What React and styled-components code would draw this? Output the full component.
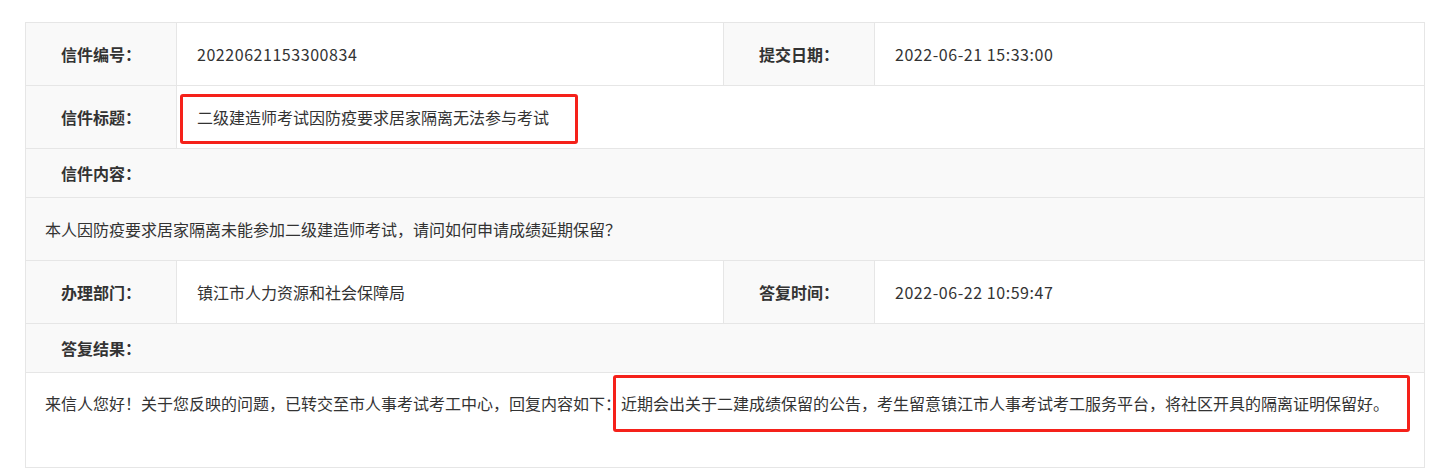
import styled, { createGlobalStyle } from "styled-components";

/* 전역 Style */
const GlobalStyle = createGlobalStyle`
  body {
    margin: 0;
    background: #fff;
    font-family: "Noto Sans CJK SC", "Noto Sans", sans-serif;
    color: #333;
  }
`;

/* 信件详情 */
const App = () => {
  return (
    <>
      <GlobalStyle />
      <Page>
        <Table>
          <Row>
            <Label>信件编号：</Label>
            <Value $w="547px" $num>20220621153300834</Value>
            <Label>提交日期：</Label>
            <Value $last $num>2022-06-21 15:33:00</Value>
          </Row>
          <Row>
            <Label>信件标题：</Label>
            <Value $last>
              <Mark $t="-11px" $r="-29px" $b="-15px" $l="-17px">
                二级建造师考试因防疫要求居家隔离无法参与考试
              </Mark>
            </Value>
          </Row>
          <HeadRow>
            <Label $plain>信件内容：</Label>
          </HeadRow>
          <TextRow $gray>
            本人因防疫要求居家隔离未能参加二级建造师考试，请问如何申请成绩延期保留？
          </TextRow>
          <Row>
            <Label>办理部门：</Label>
            <Value $w="547px">镇江市人力资源和社会保障局</Value>
            <Label>答复时间：</Label>
            <Value $last $num>2022-06-22 10:59:47</Value>
          </Row>
          <HeadRow>
            <Label $plain>答复结果：</Label>
          </HeadRow>
          <TextRow $tall>
            来信人您好！关于您反映的问题，已转交至市人事考试考工中心，回复内容如下：
            <Mark $t="-16px" $r="-21px" $b="-17px" $l="-8px">
              近期会出关于二建成绩保留的公告，考生留意镇江市人事考试考工服务平台，将社区开具的隔离证明保留好。
            </Mark>
          </TextRow>
        </Table>
      </Page>
    </>
  );
};

export default App;

/* 页面 Style */
const Page = styled.div`
  padding: 22px 0 0 25px;
`;

/* 表格 Style */
const Table = styled.div`
  width: 1398px;
  border: 1px solid #e6e6e6;
  border-bottom: none;
  font-size: 16px;
  line-height: 24px;
`;

/* 行 Style */
const Row = styled.div`
  display: flex;
  height: 62px;
  border-bottom: 1px solid #e6e6e6;
`;

/* 标题行 Style */
const HeadRow = styled(Row)`
  height: 48px;
  background: #f9f9f9;
`;

/* 文本行 Style */
const TextRow = styled.div`
  height: ${(p) => (p.$tall ? "95px" : "63px")};
  box-sizing: border-box;
  padding: ${(p) => (p.$tall ? "18px" : "19px")} 20px 0 19px;
  background: ${(p) => (p.$gray ? "#f9f9f9" : "#fff")};
  border-bottom: 1px solid #e6e6e6;
  white-space: nowrap;
`;

/* 标签 Style */
const Label = styled.div`
  width: 150px;
  flex: none;
  display: flex;
  align-items: center;
  justify-content: center;
  font-weight: bold;
  color: #333;
  background: #f9f9f9;
  border-right: ${(p) => (p.$plain ? "none" : "1px solid #e6e6e6")};
`;

/* 值 Style */
const Value = styled.div`
  width: ${(p) => p.$w || "auto"};
  flex: ${(p) => (p.$last ? 1 : "none")};
  display: flex;
  align-items: center;
  padding-left: 20px;
  box-sizing: border-box;
  letter-spacing: ${(p) => (p.$num ? "0.55px" : "normal")};
  border-right: ${(p) => (p.$last ? "none" : "1px solid #e6e6e6")};
  white-space: nowrap;
`;

/* 红框标注 Style */
const Mark = styled.span`
  position: relative;
  display: inline-block;

  &::after {
    content: "";
    position: absolute;
    top: ${(p) => p.$t};
    right: ${(p) => p.$r};
    bottom: ${(p) => p.$b};
    left: ${(p) => p.$l};
    border: 3px solid #f5211a;
    border-radius: 3px;
  }
`;
